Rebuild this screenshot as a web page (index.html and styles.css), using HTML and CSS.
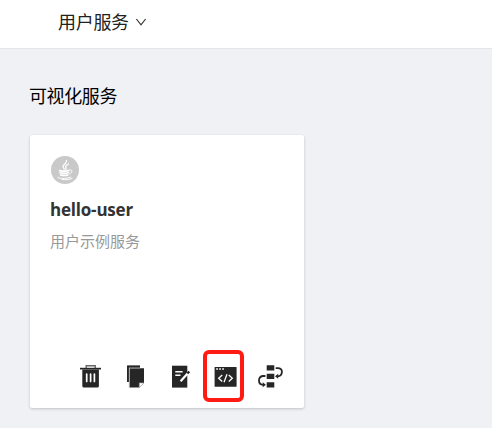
FILE: index.html
```html
<!DOCTYPE html>
<html lang="zh-CN">
<head>
<meta charset="utf-8">
<title>用户服务</title>
<link rel="stylesheet" href="styles.css">
</head>
<body>
<header class="topbar">
  <span class="topbar-title">用户服务</span>
  <svg class="chevron" width="12" height="10" viewBox="0 0 12 10"><path d="M1.4 2 6 7.8 10.6 2" fill="none" stroke="#333" stroke-width="1.2"/></svg>
</header>
<main class="content">
  <h1 class="section-title">可视化服务</h1>
  <article class="card">
    <svg class="avatar" width="28" height="28" viewBox="0 0 28 28">
      <circle cx="14" cy="14" r="14" fill="#c9c9c9"/>
      <g fill="none" stroke="#fff" stroke-linecap="round">
        <path d="M15.400 4.500c1.200 2.800-3.800 3.800-3.400 6.200.2 1 .9 1.600 1.200 2.300M17.500 8c-2.400 1.100-3.500 2-2.600 3.400.6.8.4 1.300-.1 1.800" stroke-width="1.300"/>
        <path d="M8.600 14.600c2 .5 7 .5 9 0M9 16.800c2 .6 6 .6 8.300 0M9.600 19c2 .6 5 .6 7.200 0" stroke-width="1.700"/>
        <path d="M18.400 14c3.400-1 3.500 2.600.2 3.900M6.700 20.900c-2 1.700 8.500 2.200 13 .3M11 23.500c4 .5 8 .1 10-1" stroke-width="1"/>
      </g>
    </svg>
    <h2 class="card-name">hello-user</h2>
    <p class="card-desc">用户示例服务</p>
    <div class="actions">
      <svg class="icon" viewBox="0 0 27 27">
        <path d="M9.200 5V2.700h9V5" fill="none" stroke="#666" stroke-width="1.400"/>
        <path d="M3 4.800h21v1.700H3z" fill="#262626"/>
        <path d="M5.300 6.500h16.600V23q0 1.500-1.500 1.500H6.800q-1.500 0-1.500-1.500z" fill="#262626"/>
        <path d="M9.700 11v7.500M13.600 11v7.500M17.400 11v7.500" stroke="#fff" stroke-width="1.700" stroke-linecap="round"/>
      </svg>
      <svg class="icon" viewBox="0 0 27 27">
        <path d="M5 2.500h13V5H7v14H5z" fill="#262626"/>
        <path d="M5.500 2.500H18" stroke="#777"/>
        <path d="M7.500 5.200H22v14.500l-4.800 4.800H7.500z" fill="#262626"/>
        <path d="M7.300 4.800v19.700M7 4.900h11" stroke="#aaa" stroke-width=".8"/>
        <path d="M17.300 24.500v-4.600H22z" fill="#fff" stroke="#999" stroke-width=".6"/>
      </svg>
      <svg class="icon" viewBox="0 0 27 27">
        <path d="M5 2.700h15.300v21.900H5z" fill="#262626"/>
        <path d="M8.300 8.700h7.300M8.300 12.200h5.200" stroke="#fff" stroke-width="1.500"/>
        <path d="m13.600 18.300 7.900-8.900" stroke="#fff" stroke-width="2.200"/>
        <path d="m20.400 10.600 1.900-2.100" stroke="#262626" stroke-width="2.200"/>
      </svg>
      <span class="action-marked">
        <svg class="icon" viewBox="0 0 27 27">
          <rect x="2.600" y="4" width="22" height="19.800" rx=".6" fill="#262626"/>
          <path d="M4.200 6h1.700M7.200 6h1.700M10.200 6h1.700" stroke="#fff" stroke-width="1.500"/>
          <path d="m10.200 12-3.500 3.200 3.500 3.200M16.800 12l3.500 3.200-3.500 3.200M15 11.200l-3 8" fill="none" stroke="#fff" stroke-width="1.300"/>
        </svg>
      </span>
      <svg class="icon" viewBox="0 0 27 27">
        <path d="M9.700 2.200h7.600v5.300H9.700zM9.700 10.700h7.600V16H9.700zM9.700 19.300h7.600v5.300H9.700z" fill="#262626"/>
        <path d="M18.700 5.200h2.100c2.700 0 4.100 1.400 4.100 3.600 0 2.700-1.700 4.500-4.400 4.500M8.400 13H6.500C3.500 13 2 14.700 2 17.500c0 2.900 1.700 4.300 4.300 4.300" fill="none" stroke="#262626" stroke-width="1.800"/>
        <path d="m21.200 10.800-3.200 2.500 3.200 2.400zM5.700 19.300l3.200 2.500-3.200 2.500z" fill="#262626"/>
      </svg>
    </div>
  </article>
</main>
</body>
</html>
```

FILE: styles.css
```css
*,
*::after { box-sizing: border-box; }

body {
  margin: 0;
  height: 428px;
  overflow: hidden;
  background: #f0f1f5;
  color: #000;
  font-family: "Open Sans", "Noto Sans CJK SC", sans-serif;
}

.topbar {
  display: flex;
  align-items: center;
  height: 49px;
  padding: 0 0 4px 58px;
  background: #fff;
  border-bottom: 1px solid #e3e5e8;
}

.topbar-title {
  font-size: 18px;
  font-weight: 400;
  line-height: 26px;
  letter-spacing: -0.3px;
  color: #222;
}

.chevron { margin-left: 6px; }

.content { padding: 33px 29px 0 30px; }

.section-title {
  margin: 0 0 0 -1px;
  font-size: 18px;
  font-weight: 400;
  line-height: 28px;
  letter-spacing: -0.4px;
}

.card {
  display: flex;
  flex-direction: column;
  width: 274px;
  height: 273px;
  margin-top: 25px;
  padding: 21px 20px 18px;
  background: #fff;
  border-radius: 2px;
  box-shadow: 0 1px 3px rgba(0, 0, 0, 0.2);
}

.avatar { margin-left: 1px; }

.card-name {
  margin: 13px 0 0;
  font-size: 17px;
  font-weight: 700;
  line-height: 26px;
  letter-spacing: -0.2px;
  color: #333;
}

.card-desc {
  margin: 7px 0 0;
  font-size: 15px;
  font-weight: 400;
  line-height: 22px;
  color: #999;
}

.actions {
  display: flex;
  gap: 18px;
  margin-top: auto;
  margin-left: 27px;
}

.icon {
  display: block;
  flex: none;
  width: 27px;
  height: 27px;
}

.action-marked { position: relative; }

.action-marked::after {
  content: "";
  position: absolute;
  top: -13px;
  left: -9px;
  width: 41px;
  height: 52px;
  border: 4px solid #ff1b12;
  border-radius: 6px;
}
```
